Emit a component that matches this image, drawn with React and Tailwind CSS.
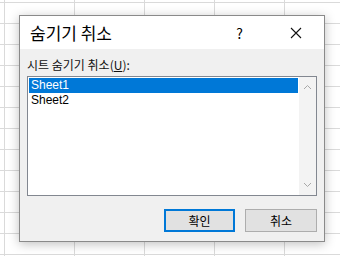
import React from "react";

const cols = [0, 1, 2, 3, 4, 5];
const rows = Array.from({ length: 14 }, (_, i) => i);

const SheetGrid = () => {
  return (
    <div className="absolute inset-0 overflow-hidden bg-white">
      <div className="-mt-[18px] -ml-[65px] flex flex-col">
        {rows.map((r) => (
          <div key={r} className="flex">
            {cols.map((c) => (
              <div
                key={c}
                className="h-[21px] w-[70px] shrink-0 border-r border-b border-[#dadada]"
              />
            ))}
          </div>
        ))}
      </div>
    </div>
  );
};

const Chevron = ({ up }) => (
  <svg width="9" height="6" viewBox="0 0 9 6" className="text-[#a8a8a8]">
    <path
      d={up ? "M1 5 L4.5 1.5 L8 5" : "M1 1 L4.5 4.5 L8 1"}
      fill="none"
      stroke="currentColor"
      strokeWidth="1"
    />
  </svg>
);

export default function App() {
  const sheets = ["Sheet1", "Sheet2"];

  return (
    <div
      className="relative h-[256px] w-[340px] overflow-hidden"
      style={{ fontFamily: '"Noto Sans CJK KR", "Noto Sans", sans-serif' }}
    >
      <SheetGrid />

      <div className="absolute left-[19px] top-[15px] flex h-[227px] w-[306px] flex-col border border-[#8a8a8a] bg-[#f0f0f0] shadow-[0_2px_10px_rgba(0,0,0,0.25)]">
        {/* title bar */}
        <div className="flex h-[33px] items-center bg-white pl-[10px]">
          <span className="text-[17px] leading-none text-black">숨기기 취소</span>
          <span className="ml-auto mr-[47px] text-[14px] leading-none text-black">?</span>
          <svg width="12" height="12" viewBox="0 0 12 12" className="mr-[22px]">
            <path d="M1 1 L11 11 M11 1 L1 11" stroke="#111" strokeWidth="1.1" />
          </svg>
        </div>

        {/* body */}
        <div className="flex flex-1 flex-col px-[7px] pt-[9px]">
          <div className="text-[12px] leading-[14px] text-[#111]">
            시트 숨기기 취소(<span className="underline">U</span>):
          </div>

          <div className="mt-[4px] flex h-[120px] border border-[#828790] bg-white">
            <div className="flex flex-1 flex-col p-[1px]">
              {sheets.map((s, i) => (
                <div
                  key={s}
                  className={`flex h-[15px] items-center overflow-hidden pl-[2px] text-[12px] leading-[15px] ${
                    i === 0 ? "bg-[#0078d7] text-white" : "text-black"
                  }`}
                  style={{ fontFamily: '"Liberation Sans", sans-serif' }}
                >
                  {s}
                </div>
              ))}
            </div>
            <div className="flex w-[17px] flex-col items-center justify-between bg-[#f3f3f3] py-[7px]">
              <Chevron up />
              <Chevron />
            </div>
          </div>

          <div className="mt-[13px] flex justify-end gap-[10px]">
            <button className="h-[23px] w-[71px] border-2 border-[#0078d7] bg-[#e1e1e1] text-[12px] text-black">
              확인
            </button>
            <button className="h-[23px] w-[72px] border border-[#adadad] bg-[#e1e1e1] text-[12px] text-black">
              취소
            </button>
          </div>
        </div>
      </div>
    </div>
  );
}
